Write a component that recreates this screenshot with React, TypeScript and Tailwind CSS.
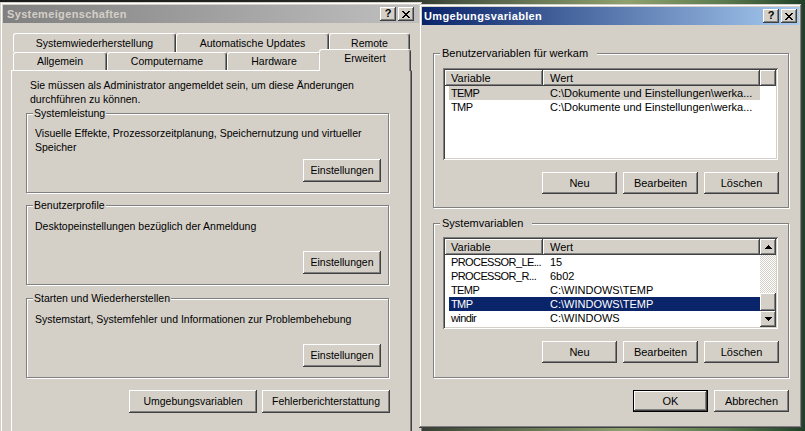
import type { ReactNode } from "react";

// classic Win2000 bevels
const raised =
  "bg-[#d4d0c8] shadow-[inset_-1px_-1px_#404040,inset_1px_1px_#ffffff,inset_-2px_-2px_#808080,inset_2px_2px_#d4d0c8]";
const sunken =
  "shadow-[inset_1px_1px_#808080,inset_-1px_-1px_#ffffff,inset_2px_2px_#404040,inset_-2px_-2px_#d4d0c8]";
const frame =
  "bg-[#d4d0c8] shadow-[inset_-1px_-1px_#404040,inset_1px_1px_#d4d0c8,inset_-2px_-2px_#808080,inset_2px_2px_#ffffff]";

interface Row {
  name: string;
  value: string;
  state?: "selected" | "inactive";
}

const userVars: Row[] = [
  { name: "TEMP", value: "C:\\Dokumente und Einstellungen\\werka...", state: "inactive" },
  { name: "TMP", value: "C:\\Dokumente und Einstellungen\\werka..." },
];

const systemVars: Row[] = [
  { name: "PROCESSOR_LE...", value: "15" },
  { name: "PROCESSOR_R...", value: "6b02" },
  { name: "TEMP", value: "C:\\WINDOWS\\TEMP" },
  { name: "TMP", value: "C:\\WINDOWS\\TEMP", state: "selected" },
  { name: "windir", value: "C:\\WINDOWS" },
];

function Button({
  children,
  className = "w-[75px]",
  isDefault = false,
}: {
  children: ReactNode;
  className?: string;
  isDefault?: boolean;
}) {
  return (
    <div
      className={`flex h-[23px] shrink-0 items-center justify-center ${
        isDefault
          ? "border border-black bg-[#d4d0c8] shadow-[inset_-1px_-1px_#404040,inset_1px_1px_#ffffff,inset_-2px_-2px_#808080,inset_2px_2px_#d4d0c8]"
          : raised
      } ${className}`}
    >
      {children}
    </div>
  );
}

function CaptionButtons() {
  return (
    <div className="flex gap-[2px]">
      <div className={`${raised} flex h-[14px] w-[16px] items-center justify-center pb-[1px] text-[11px] font-bold leading-none text-black`}>
        ?
      </div>
      <div className={`${raised} flex h-[14px] w-[16px] items-center justify-center`}>
        <svg width="8" height="7" viewBox="0 0 8 7" shapeRendering="crispEdges">
          <path
            d="M0 0h2v1h1v1h2V1h1V0h2v1H7v1H6v1H5v1h1v1h1v1h1v1H6V6H5V5H3v1H2v1H0V6h1V5h1V4h1V3H2V2H1V1H0z"
            fill="#000"
          />
        </svg>
      </div>
    </div>
  );
}

function TitleBar({ title, active, pr }: { title: string; active: boolean; pr: string }) {
  return (
    <div
      className={`flex h-[18px] shrink-0 items-center justify-between ${pr} ${
        active
          ? "bg-[linear-gradient(90deg,#0a246a,#a6caf0)] pl-[2px] text-white"
          : "bg-[linear-gradient(90deg,#808080,#c0c0c0)] pl-[4px] text-[#d4d0c8]"
      }`}
    >
      <span className="text-[11px] font-bold tracking-[0.35px]">{title}</span>
      <CaptionButtons />
    </div>
  );
}

function Group({
  title,
  className,
  legend = "px-[1px]",
  children,
}: {
  title: string;
  className: string;
  legend?: string;
  children: ReactNode;
}) {
  return (
    <div
      className={`relative flex flex-col border border-[#808080] shadow-[inset_1px_1px_#ffffff,1px_1px_#ffffff] ${className}`}
    >
      <span className={`absolute -top-[7px] left-[6px] bg-[#d4d0c8] leading-[13px] ${legend}`}>{title}</span>
      {children}
    </div>
  );
}

function Tab({ label, className }: { label: string; className: string }) {
  return (
    <div
      className={`flex items-center justify-center rounded-t-[3px] border-x border-t border-white border-r-[#404040] bg-[#d4d0c8] shadow-[inset_-1px_0_#808080] ${className}`}
    >
      {label}
    </div>
  );
}

function Arrow({ down }: { down?: boolean }) {
  return (
    <svg width="7" height="4" viewBox="0 0 7 4" shapeRendering="crispEdges" className={down ? "rotate-180" : ""}>
      <path d="M3 0h1v1h1v1h1v1h1v1H0V3h1V2h1V1h1z" fill="#000" />
    </svg>
  );
}

function ScrollBar() {
  return (
    <div className="flex w-[16px] shrink-0 flex-col">
      <div className={`${raised} flex h-[16px] items-center justify-center`}>
        <Arrow />
      </div>
      <div className="flex-1 bg-[repeating-conic-gradient(#d4d0c8_0%_25%,#ffffff_0%_50%)] bg-size-[2px_2px]" />
      <div className={`${raised} h-[18px]`} />
      <div className={`${raised} flex h-[16px] items-center justify-center`}>
        <Arrow down />
      </div>
    </div>
  );
}

function ListView({ rows, scroll }: { rows: Row[]; scroll?: boolean }) {
  return (
    <div className={`flex h-[92px] w-[335px] bg-white p-[2px] ${sunken}`}>
      <div className="flex flex-1 flex-col overflow-hidden">
        <div className="flex h-[16px] shrink-0">
          <div className={`${raised} flex w-[98px] items-center pl-[6px]`}>Variable</div>
          <div className={`${raised} flex w-[217px] items-center pl-[7px]`}>Wert</div>
          {!scroll && <div className={`${raised} flex-1`} />}
        </div>
        {rows.map((r) => (
          <div key={r.name + r.value} className="flex h-[14px] shrink-0 pl-[4px]">
            <div
              className={`flex ${
                r.state === "selected"
                  ? "bg-[#0a246a] text-white"
                  : r.state === "inactive"
                    ? "bg-[#d4d0c8]"
                    : ""
              }`}
            >
              <span className="w-[94px] overflow-hidden whitespace-nowrap pl-[2px] leading-[14px] tracking-[-0.6px]">
                {r.name}
              </span>
              <span className="w-[217px] whitespace-nowrap pl-[7px] leading-[14px]">{r.value}</span>
            </div>
          </div>
        ))}
      </div>
      {scroll && <ScrollBar />}
    </div>
  );
}

function SystemProperties() {
  return (
    <div className={`absolute left-0 top-[2px] flex h-[440px] w-[423px] flex-col p-[3px] ${frame}`}>
      <TitleBar title="Systemeigenschaften" active={false} pr="pr-[6px]" />
      <div className="ml-[8px] mt-[10px] flex w-[401px] flex-col text-[10.5px]">
        <div className="flex h-[19px] pl-[2px]">
          <Tab label="Systemwiederherstellung" className="w-[163px]" />
          <Tab label="Automatische Updates" className="w-[153px]" />
          <Tab label="Remote" className="w-[81px]" />
        </div>
        <div className="flex h-[18px] items-end pl-[2px]">
          <Tab label="Allgemein" className="h-[18px] w-[94px]" />
          <Tab label="Computername" className="h-[18px] w-[120px]" />
          <Tab label="Hardware" className="h-[18px] w-[94px]" />
          <Tab label="Erweitert" className="relative z-10 -mb-[1px] -ml-[2px] h-[22px] w-[92px] !items-start pt-[2px]" />
        </div>
        <div className="flex h-[400px] flex-col border-x border-t border-white border-r-[#404040] pl-[14px] pt-[7px] shadow-[inset_-1px_0_#808080]">
          <p className="pl-[4px] leading-[14px]">
            Sie müssen als Administrator angemeldet sein, um diese Änderungen
            <br />
            durchführen zu können.
          </p>

          <Group title="Systemleistung" className="mt-[7px] h-[80px] w-[363px] pl-[8px] pt-[12px]">
            <p className="leading-[14px]">
              Visuelle Effekte, Prozessorzeitplanung, Speichernutzung und virtueller
              <br />
              Speicher
            </p>
            <div className="mb-[10px] mr-[7px] mt-auto self-end">
              <Button className="w-[78px]">Einstellungen</Button>
            </div>
          </Group>

          <Group title="Benutzerprofile" className="mt-[12px] h-[80px] w-[363px] pl-[8px] pt-[13px]">
            <p className="leading-[14px]">Desktopeinstellungen bezüglich der Anmeldung</p>
            <div className="mb-[10px] mr-[7px] mt-auto self-end">
              <Button className="w-[78px]">Einstellungen</Button>
            </div>
          </Group>

          <Group title="Starten und Wiederherstellen" className="mt-[13px] h-[80px] w-[363px] pl-[8px] pt-[13px]">
            <p className="leading-[14px]">Systemstart, Systemfehler und Informationen zur Problembehebung</p>
            <div className="mb-[10px] mr-[7px] mt-auto self-end">
              <Button className="w-[78px]">Einstellungen</Button>
            </div>
          </Group>

          <div className="mt-[12px] flex w-[364px] justify-end gap-[5px]">
            <Button className="w-[128px]">Umgebungsvariablen</Button>
            <Button className="w-[128px]">Fehlerberichterstattung</Button>
          </div>
        </div>
      </div>
    </div>
  );
}

function EnvironmentVariables() {
  return (
    <div className={`absolute left-[419px] top-[4px] flex h-[424px] w-[383px] flex-col p-[3px] ${frame}`}>
      <TitleBar title="Umgebungsvariablen" active pr="pr-[2px]" />
      <div className="ml-[11px] mt-[28px] flex w-[356px] flex-col">
        <Group title="Benutzervariablen für werkam" className="h-[155px]" legend="pl-[2px] pr-[9px]">
          <div className="ml-[9px] mt-[14px]">
            <ListView rows={userVars} />
          </div>
          <div className="mr-[9px] mt-[12px] flex justify-end gap-[6px]">
            <Button className="w-[75px] !h-[22px]">Neu</Button>
            <Button className="w-[75px] !h-[22px]">Bearbeiten</Button>
            <Button className="w-[75px] !h-[22px]">Löschen</Button>
          </div>
        </Group>

        <Group title="Systemvariablen" className="mt-[15px] h-[155px]" legend="pl-[2px] pr-[9px]">
          <div className="ml-[9px] mt-[13px]">
            <ListView rows={systemVars} scroll />
          </div>
          <div className="mr-[9px] mt-[12px] flex justify-end gap-[6px]">
            <Button className="w-[75px] !h-[22px]">Neu</Button>
            <Button className="w-[75px] !h-[22px]">Bearbeiten</Button>
            <Button className="w-[75px] !h-[22px]">Löschen</Button>
          </div>
        </Group>

        <div className="mt-[12px] flex justify-end gap-[6px]">
          <Button isDefault className="w-[75px] !h-[22px]">
            OK
          </Button>
          <Button className="w-[75px] !h-[22px]">Abbrechen</Button>
        </div>
      </div>
    </div>
  );
}

export default function App() {
  return (
    <div className="relative h-[431px] w-[805px] overflow-hidden bg-[linear-gradient(90deg,#1a1a1a_0%,#262a26_48%,#4d5a44_58%,#8fa26e_78%,#5b7a4e_90%,#1f4028_100%)] font-['Liberation_Sans',Arial,sans-serif] text-[11px] leading-[13px] text-black">
      <SystemProperties />
      <EnvironmentVariables />
    </div>
  );
}
